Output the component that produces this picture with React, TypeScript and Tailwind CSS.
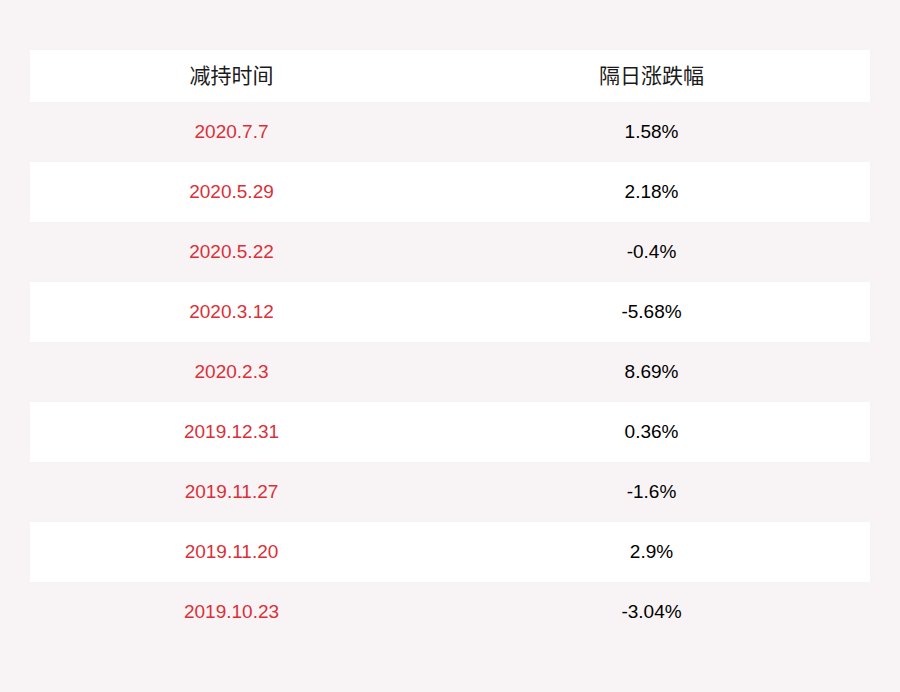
import React from "react";

const rows: [string, string][] = [
  ["2020.7.7", "1.58%"],
  ["2020.5.29", "2.18%"],
  ["2020.5.22", "-0.4%"],
  ["2020.3.12", "-5.68%"],
  ["2020.2.3", "8.69%"],
  ["2019.12.31", "0.36%"],
  ["2019.11.27", "-1.6%"],
  ["2019.11.20", "2.9%"],
  ["2019.10.23", "-3.04%"],
];

export default function App() {
  return (
    <div
      className="w-[900px] h-[692px] bg-[#f8f4f5] pt-[50px] px-[30px]"
      style={{ fontFamily: '"Liberation Sans", Arial, "Noto Sans CJK SC", sans-serif' }}
    >
      <div className="grid grid-cols-[403px_437px] h-[52px] bg-white items-center text-[21px] text-[#1a1a1a]">
        <div className="text-center">减持时间</div>
        <div className="text-center">隔日涨跌幅</div>
      </div>
      {rows.map(([d, v], i) => (
        <div
          key={d}
          className={`grid grid-cols-[403px_437px] h-[60px] items-center text-[19px] ${
            i % 2 === 1 ? "bg-white" : "bg-[#f8f4f5]"
          }`}
        >
          <div className="text-center text-[#dc2f38]">{d}</div>
          <div className="text-center text-[#000]">{v}</div>
        </div>
      ))}
    </div>
  );
}
